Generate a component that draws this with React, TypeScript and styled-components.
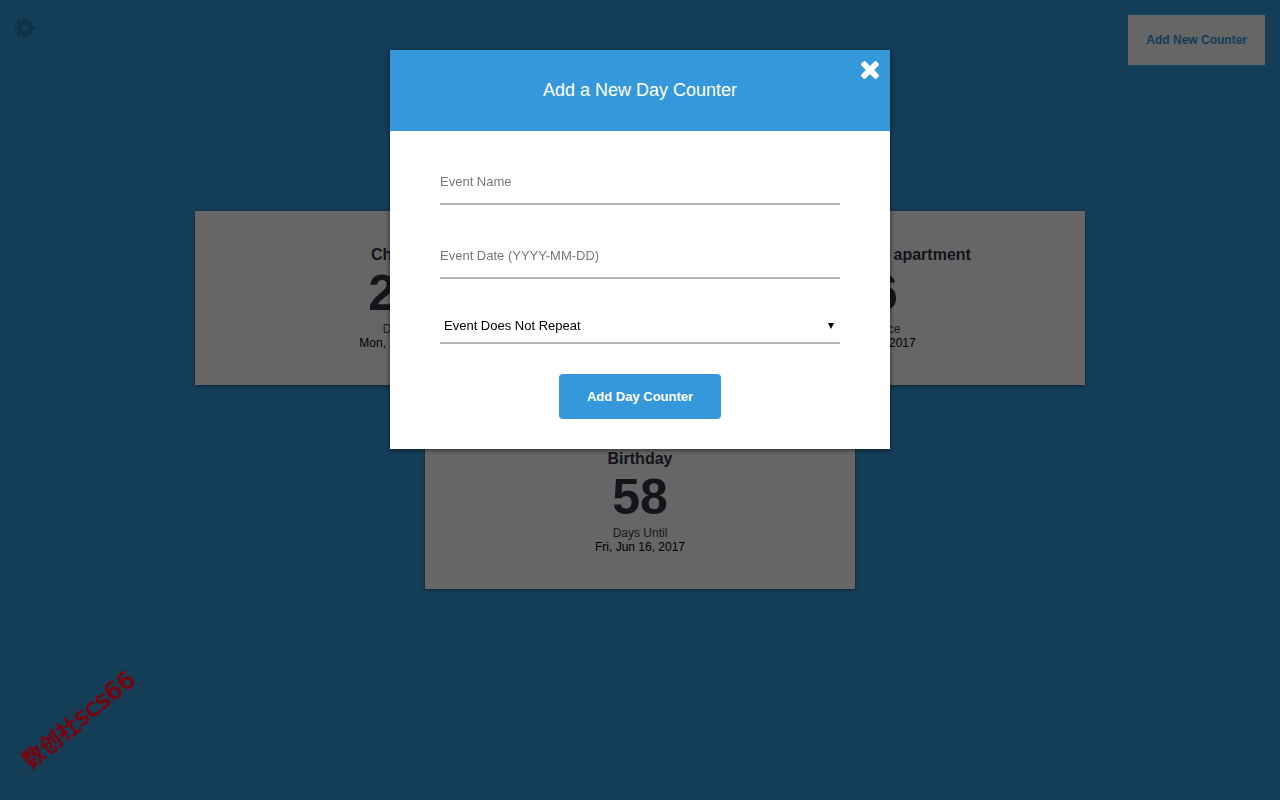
import React from "react";
import styled, { createGlobalStyle } from "styled-components";

const GlobalStyle = createGlobalStyle`
  *, *::before, *::after { box-sizing: border-box; }
  body {
    margin: 0;
    background: #3498db;
    color: #000;
    font-family: "Liberation Sans", Arial, sans-serif;
    font-size: 12px;
    line-height: 14px;
  }
  button, input, select { font-family: inherit; }
`;

const Page = styled.div`
  display: flex;
  flex-direction: column;
  min-height: 100vh;
`;

const TopBar = styled.header`
  display: flex;
  justify-content: space-between;
  align-items: flex-start;
  padding: 15px;
`;

const IconButton = styled.button`
  display: flex;
  padding: 0;
  border: 0;
  background: none;
  cursor: pointer;
`;

const SettingsButton = styled(IconButton)`
  padding: 3px 0;
  color: #217dbb;
`;

const NewCounterButton = styled.button`
  padding: 18px;
  border: 0;
  background: #fff;
  color: #3498db;
  font-size: 12px;
  font-weight: bold;
  line-height: 14px;
  cursor: pointer;
`;

const Counters = styled.main`
  display: flex;
  flex: 1;
  flex-wrap: wrap;
  justify-content: center;
  align-content: center;
  gap: 30px;
  width: 100%;
  max-width: 950px;
  margin: 0 auto;
  padding: 0 30px 80px;
`;

const Card = styled.article`
  flex: 0 1 430px;
  padding: 35px;
  background: #fff;
  box-shadow: 0 1px 3px rgba(0, 0, 0, 0.4);
  text-align: center;
`;

const CardTitle = styled.h2`
  margin: 0;
  color: #334;
  font-size: 16px;
  line-height: 18px;
`;

const DayCount = styled.div`
  color: #334;
  font-size: 50px;
  font-weight: bold;
  line-height: 58px;
`;

const Caption = styled.div`
  color: #445;
`;

const Overlay = styled.div`
  position: fixed;
  inset: 0;
  display: flex;
  justify-content: center;
  align-items: flex-start;
  padding: 50px 20px;
  overflow: auto;
  background: rgba(0, 0, 0, 0.6);
`;

const Modal = styled.section`
  position: relative;
  width: 100%;
  max-width: 500px;
  background: #fff;
  box-shadow: 0 1px 5px rgba(0, 0, 0, 0.6);
`;

const ModalTitle = styled.h1`
  margin: 0;
  padding: 30px;
  background: #3498db;
  color: #fff;
  font-size: 18px;
  font-weight: normal;
  line-height: 21px;
  text-align: center;
`;

const CloseButton = styled(IconButton)`
  position: absolute;
  top: 10px;
  right: 10px;
  color: #fff;
`;

const Form = styled.form`
  display: flex;
  flex-direction: column;
  gap: 30px;
  padding: 30px 50px;
`;

const TextField = styled.input`
  width: 100%;
  height: 44px;
  padding: 0 0 2px;
  border: 0;
  border-bottom: 2px solid #b4b4b4;
  border-radius: 0;
  background: none;
  font-size: 13px;
  outline: 0;
  &::placeholder { color: #777; opacity: 1; }
`;

const SelectBox = styled.div`
  position: relative;
`;

const Select = styled.select`
  display: block;
  width: 100%;
  height: 35px;
  padding: 0 4px;
  border: 0;
  border-bottom: 2px solid #b4b4b4;
  border-radius: 0;
  background: none;
  color: #000;
  font-size: 13px;
  appearance: none;
  outline: 0;
`;

const Arrow = styled.svg`
  position: absolute;
  top: 14px;
  right: 6px;
  pointer-events: none;
`;

const SubmitButton = styled.button`
  align-self: center;
  padding: 15px 28px;
  border: 0;
  border-radius: 4px;
  background: #3498db;
  color: #fff;
  font-size: 13px;
  font-weight: bold;
  line-height: 15px;
  cursor: pointer;
`;

const Stamp = styled.div`
  position: fixed;
  left: 9px;
  bottom: 66px;
  transform: rotate(-39deg);
  color: #7d0008;
  font-family: "DejaVu Sans", "Noto Sans CJK SC", sans-serif;
  font-size: 25px;
  line-height: 28px;
  white-space: nowrap;
  pointer-events: none;
  -webkit-text-stroke: 1px #7d0008;
`;

const StampName = styled.b`
  font-family: "Noto Sans CJK SC", sans-serif;
  font-size: 22px;
  -webkit-text-stroke: 0;
`;

const counters = [
  { title: "Christmas", days: 250, caption: "Days Until", date: "Mon, Dec 25, 2017" },
  { title: "Moved into new apartment", days: 26, caption: "Days Since", date: "Fri, Mar 24, 2017" },
  { title: "Birthday", days: 58, caption: "Days Until", date: "Fri, Jun 16, 2017" },
];

export default function App() {
  return (
    <>
      <GlobalStyle />
      <Page>
        <TopBar>
          <SettingsButton type="button" aria-label="Settings">
            <svg width="20" height="20" viewBox="128 128 1536 1536" fill="currentColor" aria-hidden="true">
              <path d="M1152 896q0-106-75-181t-181-75-181 75-75 181 75 181 181 75 181-75 75-181zm512-109v222q0 12-8 23t-20 13l-185 28q-19 54-39 91 35 50 107 138 10 12 10 25t-9 23q-27 37-99 108t-94 71q-12 0-26-9l-138-108q-44 23-91 38-16 136-29 186-7 28-36 28h-222q-14 0-24.500-8.500t-11.500-21.500l-28-184q-49-16-90-37l-141 107q-10 9-25 9-14 0-25-11-126-114-165-168-7-10-7-23 0-12 8-23 15-21 51-66.500t54-70.500q-27-50-41-99l-183-27q-13-2-21-12.500t-8-23.500v-222q0-12 8-23t19-13l186-28q14-46 39-92-40-57-107-138-10-12-10-24 0-10 9-23 26-36 98.500-107.500t94.500-71.500q13 0 26 10l138 107q44-23 91-38 16-136 29-186 7-28 36-28h222q14 0 24.500 8.500t11.500 21.500l28 184q49 16 90 37l142-107q9-9 24-9 13 0 25 10 129 119 165 170 7 8 7 22 0 12-8 23-15 21-51 66.500t-54 70.500q26 50 41 98l183 28q13 2 21 12.500t8 23.500z" />
            </svg>
          </SettingsButton>
          <NewCounterButton type="button">Add New Counter</NewCounterButton>
        </TopBar>
        <Counters>
          {counters.map((c) => (
            <Card key={c.title}>
              <CardTitle>{c.title}</CardTitle>
              <DayCount>{c.days}</DayCount>
              <Caption>{c.caption}</Caption>
              <div>{c.date}</div>
            </Card>
          ))}
        </Counters>
      </Page>
      <Overlay>
        <Modal role="dialog" aria-modal="true" aria-labelledby="modal-title">
          <ModalTitle id="modal-title">Add a New Day Counter</ModalTitle>
          <CloseButton type="button" aria-label="Close">
            <svg width="20" height="20" viewBox="236 300 1320 1320" fill="currentColor" aria-hidden="true">
              <path d="M1490 1322q0 40-28 68l-136 136q-28 28-68 28t-68-28l-294-294-294 294q-28 28-68 28t-68-28l-136-136q-28-28-28-68t28-68l294-294-294-294q-28-28-28-68t28-68l136-136q28-28 68-28t68 28l294 294 294-294q28-28 68-28t68 28l136 136q28 28 28 68t-28 68l-294 294 294 294q28 28 28 68z" />
            </svg>
          </CloseButton>
          <Form onSubmit={(e: React.FormEvent) => e.preventDefault()}>
            <TextField type="text" aria-label="Event Name" placeholder="Event Name" />
            <TextField type="text" aria-label="Event Date" placeholder="Event Date (YYYY-MM-DD)" />
            <SelectBox>
              <Select aria-label="Event repeat">
                <option>Event Does Not Repeat</option>
                <option>Event Repeats</option>
              </Select>
              <Arrow width="6" height="6" viewBox="0 0 6 6" aria-hidden="true">
                <path d="M0 0h6L3 6z" />
              </Arrow>
            </SelectBox>
            <SubmitButton type="submit">Add Day Counter</SubmitButton>
          </Form>
        </Modal>
      </Overlay>
      <Stamp>
        <StampName>数创社</StampName>scs66
      </Stamp>
    </>
  );
}
